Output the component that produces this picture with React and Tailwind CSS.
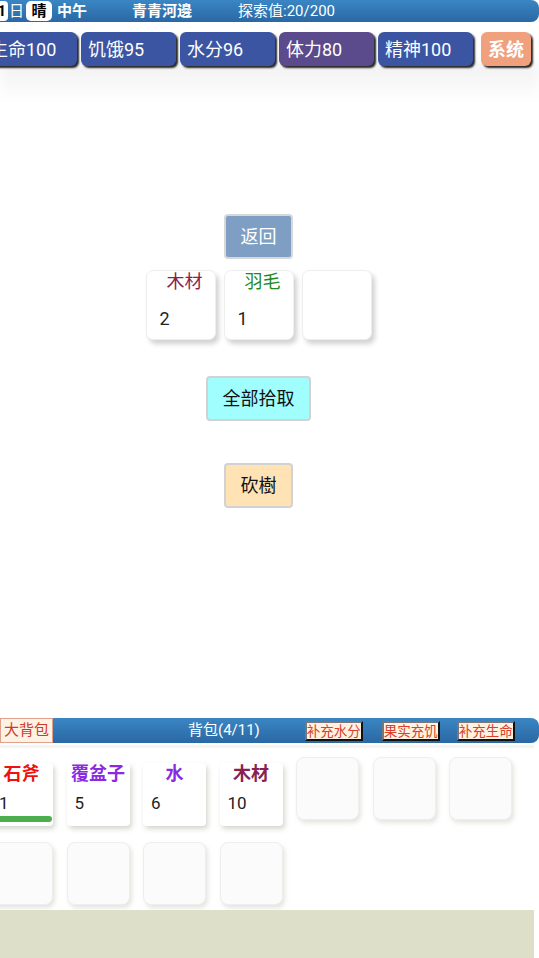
import React from "react";

const F = { fontFamily: 'Roboto, "Noto Sans CJK SC", sans-serif' };

function StatBtn({ label, color, bold, w }) {
  return (
    <div
      className={`h-[34px] ${w} shrink-0 rounded-[6px] flex items-center px-[7px] text-[18px] whitespace-nowrap text-white shadow-[2px_2px_2px_rgba(0,0,0,0.85)] ${color} ${bold ? "font-bold justify-center" : ""}`}
    >
      {label}
    </div>
  );
}

function MidCard({ name, color, count }) {
  return (
    <div className="w-[70px] h-[70px] bg-white rounded-[7px] border border-[#eee] shadow-[3px_4px_5px_rgba(0,0,0,0.18)] flex flex-col">
      {name ? (
        <>
          <div className={`text-[18px] leading-[22px] pl-[20px] ${color}`}>{name}</div>
          <div className="text-[18px] leading-[22px] mt-[15px] pl-[13px] text-[#222]">{count}</div>
        </>
      ) : null}
    </div>
  );
}

function ItemCard({ name, color, count, bar, first }) {
  return (
    <div className={`w-[63px] h-[63px] mt-[6px] shrink-0 bg-white rounded-[4px] shadow-[2px_3px_5px_rgba(120,120,100,0.3)] flex flex-col relative`}>
      <div className={`text-[18px] leading-[22px] font-bold text-center whitespace-nowrap ${color}`}>{name}</div>
      <div className={`text-[17px] leading-[20px] mt-[8px] text-[#222] ${first ? "pl-[9px]" : "pl-[8px]"}`}>{count}</div>
      {bar ? (
        <div className="absolute left-0 right-[1px] bottom-[4px] h-[6px] rounded-full bg-[#4cae4c]" />
      ) : null}
    </div>
  );
}

function EmptyCard({ mt }) {
  return (
    <div className={`w-[63px] h-[63px] shrink-0 bg-[#fbfbfb] rounded-[8px] border border-[#eee] shadow-[2px_3px_4px_rgba(150,150,130,0.25)] ${mt || ""}`} />
  );
}

function SmallBtn({ label }) {
  return (
    <div className="h-[20px] w-[58px] flex items-center justify-center whitespace-nowrap text-[13.5px] leading-[14px] text-[#d8402a] bg-[#fff2e2] border-2 border-t-[#777] border-l-[#777] border-b-[#111] border-r-[#111]">
      {label}
    </div>
  );
}

export default function App() {
  return (
    <div className="w-[539px] h-[958px] bg-white overflow-hidden relative" style={F}>
      {/* top bar */}
      <div className="h-[22px] w-[539px] rounded-r-[8px] bg-gradient-to-b from-[#3a86c4] to-[#2a68a4] flex items-center text-white text-[15px] leading-[18px] whitespace-nowrap">
        <div className="ml-[-3px] h-[20px] w-[11px] bg-white rounded-[4px] text-black font-bold flex items-center justify-end pr-[2px]">1</div>
        <div className="ml-[1px]">日</div>
        <div className="ml-[2px] h-[20px] w-[26px] bg-white rounded-[5px] text-black font-bold flex items-center justify-center">晴</div>
        <div className="ml-[5px] font-bold">中午</div>
        <div className="ml-[45px] font-bold">青青河邊</div>
        <div className="ml-[46px]">探索值:20/200</div>
      </div>

      {/* stat row */}
      <div className="relative">
        <div className="absolute left-0 right-0 top-[30px] h-[40px] bg-gradient-to-b from-[rgba(0,0,0,0.06)] to-transparent blur-[6px]" />
        <div className="relative flex mt-[10px] ml-[-17px] gap-[4px]">
          <StatBtn label="生命100" color="bg-[#3c55a2]" w="w-[94px]" />
          <StatBtn label="饥饿95" color="bg-[#3c55a2]" w="w-[95px]" />
          <StatBtn label="水分96" color="bg-[#3c55a2]" w="w-[95px]" />
          <StatBtn label="体力80" color="bg-[#5b4a8c]" w="w-[95px]" />
          <StatBtn label="精神100" color="bg-[#3c55a2]" w="w-[95px]" />
          <div className="ml-[4px]">
            <StatBtn label="系统" color="bg-[#f0a07c]" bold w="w-[50px]" />
          </div>
        </div>
      </div>

      {/* middle */}
      <div className="w-[517px] flex flex-col items-center">
        <div className="mt-[148px] w-[69px] h-[45px] bg-[#7e9fc3] border-2 border-[#d8d8d8] rounded-[4px] text-white text-[18px] flex items-center justify-center">返回</div>
        <div className="mt-[11px] flex gap-[8px]">
          <MidCard name="木材" color="text-[#8b1f4f]" count="2" />
          <MidCard name="羽毛" color="text-[#1e8b22]" count="1" />
          <MidCard />
        </div>
        <div className="mt-[36px] w-[105px] h-[45px] bg-[#a0fefe] border-2 border-[#d2d2d2] rounded-[4px] text-[#111] text-[18px] flex items-center justify-center">全部拾取</div>
        <div className="mt-[42px] w-[69px] h-[45px] bg-[#ffe3b5] border-2 border-[#d2d2d2] rounded-[4px] text-[#111] text-[18px] flex items-center justify-center">砍樹</div>
      </div>

      {/* bottom bar */}
      <div className="absolute left-0 top-[718px] w-[539px]">
        <div className="h-[25px] w-[539px] rounded-r-[8px] bg-gradient-to-b from-[#3a86c4] to-[#2a68a4] flex items-center text-[15px] whitespace-nowrap">
          <div className="h-[25px] w-[53px] bg-[#fdf3e4] border border-[#e0a08e] text-[#d33a2a] flex items-center justify-center">大背包</div>
          <div className="ml-[135px] text-white">背包(4/11)</div>
          <div className="ml-[45px]"><SmallBtn label="补充水分" /></div>
          <div className="ml-[19px]"><SmallBtn label="果实充饥" /></div>
          <div className="ml-[17px]"><SmallBtn label="补充生命" /></div>
        </div>
        <div className="h-[3px] mt-[2px] bg-[#f4f4f0] w-[534px]" />

        {/* items */}
        <div className="flex items-start gap-[13.5px] ml-[-10px] mt-[9px]">
          <ItemCard name="石斧" color="text-[#ee1111]" count="1" bar first />
          <ItemCard name="覆盆子" color="text-[#8a2be2]" count="5" />
          <ItemCard name="水" color="text-[#8a2be2]" count="6" />
          <ItemCard name="木材" color="text-[#8b1f4f]" count="10" />
          <EmptyCard />
          <EmptyCard />
          <EmptyCard />
        </div>
        <div className="flex items-start gap-[13.5px] ml-[-10px] mt-[16px]">
          <EmptyCard />
          <EmptyCard />
          <EmptyCard />
          <EmptyCard />
        </div>
      </div>

      {/* bottom panel */}
      <div className="absolute left-0 top-[910px] w-[534px] h-[48px] bg-[#dddfc8]" />
    </div>
  );
}
